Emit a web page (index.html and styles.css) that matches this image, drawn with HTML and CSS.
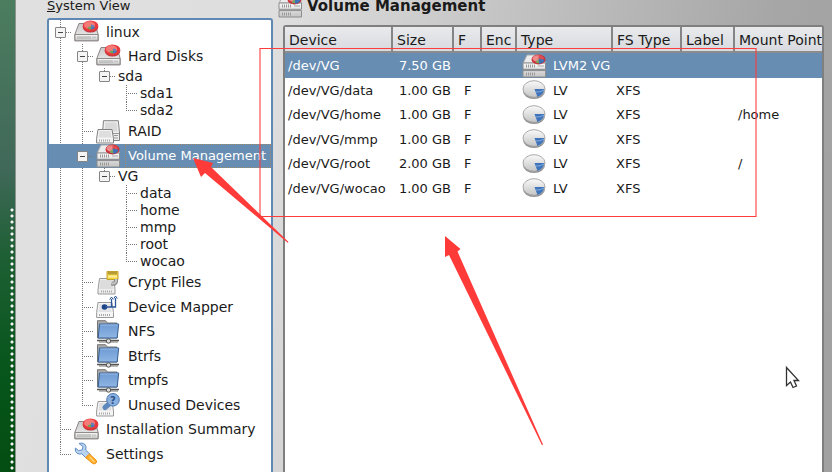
FILE: index.html
```
<!DOCTYPE html>
<html lang="en">

<head>
  <meta charset="utf-8">
  <title>Volume Management</title>
  <link rel="stylesheet" href="styles.css">
</head>

<body>
  <!-- shared icons -->
  <svg class="sprite" width="0" height="0" aria-hidden="true">
    <defs>
      <linearGradient id="metal" x1="0" y1="0" x2="0" y2="1">
        <stop offset="0" stop-color="#fafafa" />
        <stop offset="1" stop-color="#c4c4c4" />
      </linearGradient>
      <linearGradient id="face" x1="0" y1="0" x2="0" y2="1">
        <stop offset="0" stop-color="#c9c9c9" />
        <stop offset="1" stop-color="#f2f2f2" />
      </linearGradient>
      <linearGradient id="blue" x1="0" y1="0" x2="0" y2="1">
        <stop offset="0" stop-color="#6d9bd4" />
        <stop offset="1" stop-color="#8fb5e3" />
      </linearGradient>
    </defs>
    <symbol id="disk" viewBox="0 0 25 24">
      <path d="M5 3.5h16l3.2 11v6.3H.8v-6.3z" fill="url(#face)" stroke="#8b8482" />
      <path d="M1 14.5h23v6.2H1z" fill="url(#metal)" stroke="#918c8a" />
      <path d="M4 16v3M6 16v3M8 16v3M10 16v3M12 16v3M14 16v3M16 16v3" stroke="#aaa" />
      <path d="M18 17.5h4" stroke="#c8c8c8" stroke-width="2" />
      <ellipse cx="16.5" cy="7" rx="7.8" ry="5.6" fill="#b9323a" />
      <ellipse cx="16.5" cy="6" rx="7.8" ry="5.6" fill="#e8393d" />
      <ellipse cx="15.5" cy="5" rx="5.5" ry="3.8" fill="#f47a78" />
      <path d="M17 6.2V4.5q3 0 4 2.2z" fill="#5d85bb" />
      <path d="M17 6.2l4 .8q-1 2.500-4 2.500z" fill="#4779bd" />
      <path d="M17 6.2v3.300q-3 0-3.600-2.300z" fill="#6fa557" />
    </symbol>
    <symbol id="volume" viewBox="0 0 25 24">
      <path d="M5 1h15l3.5 8H1.2z" fill="#ececec" stroke="#aaa" />
      <path d="M1 9h22.5v6.3H1zM1 16.6h22.5v6.4H1z" fill="url(#metal)" stroke="#8c8c8c" />
      <path d="M4 12h10M4 20h10" stroke="#999" stroke-width="3" stroke-dasharray="1 1" />
      <path d="M16 12h6M16 20h6" stroke="#ccc" stroke-width="2" />
      <ellipse cx="16.5" cy="5.5" rx="7" ry="5" fill="#c8303a" />
      <ellipse cx="15.5" cy="4.5" rx="5" ry="3.3" fill="#ee8b88" />
      <path d="M16.500 5V1.300q5.500.4 5.800 4.200z" fill="#dd4c50" />
      <path d="M16.500 4.500l6 1.200q-1 4-5.500 4z" fill="#3f71b6" />
      <path d="M16.500 5l-3 3.300q1.600 1.300 3.600 1z" fill="#72a861" />
    </symbol>
    <symbol id="raid" viewBox="0 0 25 24">
      <path d="M7.500.7h14.800l1.200 12.300v7.500H6.500V13z" fill="#eee" stroke="#808080" />
      <path d="M9.500 2.500h11l1 9h-13z" fill="#d9d9d9" />
      <path d="M7 13.500h16M18 15.500h4M18 18h4" stroke="#999" />
      <path d="M2 9.500h14l1.500 9v4.500H.6v-4.500z" fill="#f4f4f4" stroke="#808080" />
      <path d="M3.500 11h11l1 6.500h-13z" fill="#dedede" />
      <path d="M3 20.500h12" stroke="#aaa" stroke-width="2" stroke-dasharray="1 1" />
    </symbol>
    <symbol id="crypt" viewBox="0 0 25 24">
      <path d="M3.500 7.500H18l1 11v4.500H2v-4.500z" fill="#eee" stroke="#999" />
      <path d="M4.500 9h12l1 9h-14z" fill="#dcdcdc" />
      <path d="M5 20.500h11" stroke="#aaa" stroke-width="2" stroke-dasharray="1 1" />
      <path d="M11 .5h11v8H11z" fill="#f5d43e" stroke="#c2a02c" />
      <path d="M12 1h9v2.500h-9z" fill="#b89a35" />
      <path d="M12 5.500h9" stroke="#fff1a0" stroke-width="2" />
      <path d="M20 8v2.500q-1 3-4.500 2" fill="none" stroke="#8a8a8a" stroke-width="4" />
      <path d="M20 8v2.500q-1 2.600-4 2" fill="none" stroke="#c4c4c4" stroke-width="2" />
    </symbol>
    <symbol id="mapper" viewBox="0 0 25 24">
      <path d="M2 7.500h14l1.500 10v5H.6v-5z" fill="#f5f5f5" stroke="#999" />
      <path d="M3.500 9h11l1 8h-13z" fill="#e2e4e8" />
      <path d="M3 20h12" stroke="#aaa" stroke-width="2" stroke-dasharray="1 1" />
      <circle cx="8.500" cy="12" r="2.800" fill="#1c4587" />
      <path d="M9 12h10.500V3M15.500 12V4" fill="none" stroke="#2a5699" stroke-width="1.300" />
      <path d="M13.700 4.500L15.500 2l1.800 2.500M17.800 3.500L19.500 1l1.800 2.500" fill="none" stroke="#2a5699" />
    </symbol>
    <symbol id="netfolder" viewBox="0 0 25 24">
      <path d="M3 22h19" stroke="#bbb" stroke-width="2" />
      <path d="M1 20.500h22" stroke="#555" stroke-width="1.500" />
      <path d="M1.500 18V.7h8l2 2.300h9.500v15z" fill="#aaa" stroke="#757575" />
      <path d="M3.500 4h19.200l-1.500 14H2.200z" fill="url(#blue)" stroke="#376096" />
      <path d="M4.300 5h17.500" stroke="#9abce5" />
      <circle cx="12.500" cy="21" r="2.200" fill="#ddd" stroke="#555" />
    </symbol>
    <symbol id="unused" viewBox="0 0 25 24">
      <path d="M2 8.500h14l1.500 9.500v5H.6v-5z" fill="#f5f5f5" stroke="#999" />
      <path d="M3.500 10h11l1 7.500h-13z" fill="#e0e0e0" />
      <path d="M3 20.500h12" stroke="#aaa" stroke-width="2" stroke-dasharray="1 1" />
      <path d="M13 11l-4 3.500" stroke="#5d88bd" stroke-width="5" stroke-linecap="round" />
      <circle cx="17" cy="6.800" r="6.300" fill="#8bb0de" stroke="#4b79b4" />
      <text x="17" y="10.500" class="icon-mark">?</text>
    </symbol>
    <symbol id="tools" viewBox="0 0 25 24">
      <path d="M5 1.500l4 3-.8 3.500-3.700.5L1.300 6q-.6 4 2 5.500 2.500 1 4.500.3l4.700 4.700 4-3.800-4.700-4.500Q12.800 4 10.500 2 8 .3 5 1.500z" fill="#b9d2ef" stroke="#5f8fc6" />
      <path d="M11.500 15.500l4-3.500 6.500 6q1.500 2.300-.5 3.500-1.500 1-3.500-.5z" fill="#ffac26" stroke="#f0951c" />
      <path d="M15.500 15l5 5" stroke="#ffd27d" stroke-width="1.500" />
    </symbol>
    <symbol id="pie" viewBox="0 0 25 24">
      <ellipse cx="12" cy="13" rx="11" ry="8" fill="#929292" />
      <ellipse cx="12" cy="11" rx="11" ry="8.300" fill="url(#metal)" stroke="#aaa" />
      <path d="M12.500 11h9.800q-.5 5.500-6.800 8z" fill="#3d74bc" />
      <path d="M14 14q4 .5 8-2" fill="none" stroke="#87abd9" />
    </symbol>
  </svg>

  <div class="desktop">
    <div class="wallpaper"></div>
    <div class="window">
      <nav class="sidebar">
        <h2 class="caption"><u>S</u>ystem View</h2>
        <ul class="tree">
          <li>
            <div class="row"><button class="toggle" aria-label="Collapse linux"></button><span class="branch short"></span><svg class="icon"><use href="#disk" /></svg><a href="#linux">linux</a></div>
            <ul>
              <li>
                <div class="row"><button class="toggle" aria-label="Collapse Hard Disks"></button><span class="branch short"></span><svg class="icon"><use href="#disk" /></svg><a href="#disks">Hard Disks</a></div>
                <ul class="small">
                  <li>
                    <div class="row"><button class="toggle" aria-label="Collapse sda"></button><span class="branch short"></span><a href="#sda">sda</a></div>
                    <ul>
                      <li><div class="row"><span class="branch"></span><a href="#sda1">sda1</a></div></li>
                      <li><div class="row"><span class="branch"></span><a href="#sda2">sda2</a></div></li>
                    </ul>
                  </li>
                </ul>
              </li>
              <li><div class="row"><span class="branch"></span><svg class="icon"><use href="#raid" /></svg><a href="#raids">RAID</a></div></li>
              <li>
                <div class="row selected"><button class="toggle" aria-label="Collapse Volume Management"></button><span class="branch short"></span><svg class="icon"><use href="#volume" /></svg><a href="#volumes">Volume Management</a></div>
                <ul class="small">
                  <li>
                    <div class="row"><button class="toggle" aria-label="Collapse VG"></button><span class="branch short"></span><a href="#vg">VG</a></div>
                    <ul>
                      <li><div class="row"><span class="branch"></span><a href="#data">data</a></div></li>
                      <li><div class="row"><span class="branch"></span><a href="#home">home</a></div></li>
                      <li><div class="row"><span class="branch"></span><a href="#mmp">mmp</a></div></li>
                      <li><div class="row"><span class="branch"></span><a href="#root">root</a></div></li>
                      <li><div class="row"><span class="branch"></span><a href="#wocao">wocao</a></div></li>
                    </ul>
                  </li>
                </ul>
              </li>
              <li><div class="row"><span class="branch"></span><svg class="icon"><use href="#crypt" /></svg><a href="#cryptfiles">Crypt Files</a></div></li>
              <li><div class="row"><span class="branch"></span><svg class="icon"><use href="#mapper" /></svg><a href="#dm">Device Mapper</a></div></li>
              <li><div class="row"><span class="branch"></span><svg class="icon"><use href="#netfolder" /></svg><a href="#nfs">NFS</a></div></li>
              <li><div class="row"><span class="branch"></span><svg class="icon"><use href="#netfolder" /></svg><a href="#btrfs">Btrfs</a></div></li>
              <li><div class="row"><span class="branch"></span><svg class="icon"><use href="#netfolder" /></svg><a href="#tmpfs">tmpfs</a></div></li>
              <li><div class="row"><span class="branch"></span><svg class="icon"><use href="#unused" /></svg><a href="#unuseddevices">Unused Devices</a></div></li>
            </ul>
          </li>
          <li><div class="row"><span class="branch"></span><svg class="icon"><use href="#disk" /></svg><a href="#summary">Installation Summary</a></div></li>
          <li><div class="row"><span class="branch"></span><svg class="icon"><use href="#tools" /></svg><a href="#settings">Settings</a></div></li>
        </ul>
      </nav>

      <main class="content">
        <h1 class="title"><svg class="icon"><use href="#volume" /></svg>Volume Management</h1>
        <div class="panel">
          <table>
            <colgroup>
              <col class="col-device"><col class="col-size"><col class="col-f"><col class="col-enc">
              <col class="col-type"><col class="col-fs"><col class="col-label"><col>
            </colgroup>
            <thead>
              <tr><th>Device</th><th>Size</th><th>F</th><th>Enc</th><th>Type</th><th>FS Type</th><th>Label</th><th>Mount Point</th></tr>
            </thead>
            <tbody>
              <tr class="selected"><td>/dev/VG</td><td class="size">7.50 GB</td><td></td><td></td><td><span class="type"><svg class="icon"><use href="#volume" /></svg>LVM2 VG</span></td><td></td><td></td><td></td></tr>
              <tr><td>/dev/VG/data</td><td class="size">1.00 GB</td><td class="flag">F</td><td></td><td><span class="type"><svg class="icon"><use href="#pie" /></svg>LV</span></td><td>XFS</td><td></td><td></td></tr>
              <tr><td>/dev/VG/home</td><td class="size">1.00 GB</td><td class="flag">F</td><td></td><td><span class="type"><svg class="icon"><use href="#pie" /></svg>LV</span></td><td>XFS</td><td></td><td>/home</td></tr>
              <tr><td>/dev/VG/mmp</td><td class="size">1.00 GB</td><td class="flag">F</td><td></td><td><span class="type"><svg class="icon"><use href="#pie" /></svg>LV</span></td><td>XFS</td><td></td><td></td></tr>
              <tr><td>/dev/VG/root</td><td class="size">2.00 GB</td><td class="flag">F</td><td></td><td><span class="type"><svg class="icon"><use href="#pie" /></svg>LV</span></td><td>XFS</td><td></td><td>/</td></tr>
              <tr><td>/dev/VG/wocao</td><td class="size">1.00 GB</td><td class="flag">F</td><td></td><td><span class="type"><svg class="icon"><use href="#pie" /></svg>LV</span></td><td>XFS</td><td></td><td></td></tr>
            </tbody>
          </table>
        </div>
      </main>
    </div>
  </div>

  <!-- red marks and mouse pointer on top of the window -->
  <svg class="marks" width="832" height="472" aria-hidden="true">
    <path d="M260 48.500h496M260 216.500h496" stroke="#ff3c3c" />
    <path d="M260 48v169M756 48v169" stroke="#ff3c3c" stroke-opacity=".55" stroke-width="2" />
    <path d="M193 158l20 5-2 4 77.500 75-.8.8L205 173l-4 4z" fill="#ff3b3a" />
    <path d="M445 236l15.500 13-3 2.500L543 444.500l-1 .7L449 255l-4 2z" fill="#ff3b3a" />
    <path d="M786.500 367.500v18l4-3.500 2.500 5.500 3.500-1.500-2.500-5.500h4.500z" fill="#fff" stroke="#333" stroke-width="1.300" />
  </svg>
</body>

</html>
```
FILE: styles.css
```
* {
  box-sizing: border-box;
}

body {
  margin: 0;
  overflow: hidden;
  font-family: "DejaVu Sans", Verdana, sans-serif;
  font-size: 13px;
  color: #1a1a1a;
}

ul {
  list-style: none;
  margin: 0;
  padding: 0;
}

.sprite {
  position: absolute;
}

.icon {
  flex: none;
  width: 25px;
  height: 24px;
}

.icon-mark {
  font-size: 10px;
  font-weight: bold;
  fill: #28538c;
  text-anchor: middle;
}

.desktop {
  display: flex;
  height: 100vh;
}

.wallpaper {
  flex: 0 0 16px;
  padding-top: 208px;
  border-right: 1px solid #8c948e;
  background: linear-gradient(#4c7d5f, #41695a 35%, #1d5f33 55%, #06551a 80%, #044d12);
}

.wallpaper::after {
  content: "";
  display: block;
  height: 100%;
  margin-left: 10px;
  background: radial-gradient(circle at 2px 2px, #f2f5f3 1px, transparent 2px) 0 0 / 6px 6px;
}

.window {
  flex: 1;
  display: flex;
  gap: 10px;
  min-width: 0;
  padding: 0 8px 0 31px;
  background: linear-gradient(100deg, #e0e0e0, #dedede 30%, #c3c3c3 55%, #a6a6a6 85%, #a0a0a0);
}

.sidebar {
  flex: 0 0 226px;
  display: flex;
  flex-direction: column;
  min-width: 0;
}

.caption {
  margin: 0 0 6px;
  font-size: 13px;
  font-weight: normal;
  line-height: 12px;
}

.tree {
  flex: 1;
  padding-left: 11px;
  overflow: hidden;
  border: solid #5f88b4;
  border-width: 2px 2px 0;
  border-radius: 3px 3px 0 0;
  background: #fff;
  font-size: 14px;
}

.tree ul {
  margin-left: 22px;
}

/* vertical guide line of each level */
.tree li {
  background: repeating-linear-gradient(#777 0 1px, transparent 1px 2px) 0 0 / 1px 100% no-repeat;
}

.tree li:last-child {
  background-size: 1px 12px;
}

.tree .small li:last-child {
  background-size: 1px 9px;
}

.row {
  display: flex;
  align-items: center;
  height: 24px;
  white-space: nowrap;
}

li:nth-child(even) > .row {
  height: 25px;
}

.small li > .row {
  height: 17px;
}

.row a {
  padding: 0 3px;
  color: inherit;
  line-height: 17px;
  text-decoration: none;
}

.row .icon {
  margin: 0 4px 0 3px;
}

.branch {
  width: 11px;
  height: 1px;
  background: repeating-linear-gradient(90deg, #777 0 1px, transparent 1px 2px);
}

.branch.short {
  width: 5px;
}

.toggle {
  flex: none;
  width: 11px;
  height: 11px;
  margin-left: -5px;
  padding: 0;
  border: 1px solid #858585;
  border-radius: 1px;
  background: linear-gradient(#444, #444) center / 5px 1px no-repeat #f4f4f4;
}

.row.selected {
  margin-left: -33px;
  padding-left: 33px;
  background: #678db2;
  color: #fff;
  font-size: 13px;
}

.row.selected a {
  flex: 1;
  line-height: 24px;
  outline: 1px dotted #9a8a70;
  outline-offset: -1px;
}

.content {
  flex: 1;
  display: flex;
  flex-direction: column;
  min-width: 0;
}

.title {
  display: flex;
  align-items: center;
  gap: 4px;
  height: 12px;
  margin: 0 0 13px -5px;
  font-size: 15px;
}

.panel {
  flex: 1;
  overflow: hidden;
  border: 2px solid #7f7f7f;
  border-bottom: 0;
  border-radius: 3px 3px 0 0;
  background: #fff;
}

table {
  width: 100%;
  table-layout: fixed;
  border-collapse: separate;
  border-spacing: 0;
}

.col-device {
  width: 108px;
}

.col-size {
  width: 61px;
}

.col-f {
  width: 28px;
}

.col-enc {
  width: 35px;
}

.col-type {
  width: 96px;
}

.col-fs {
  width: 69px;
}

.col-label {
  width: 53px;
}

th,
td {
  padding: 0 3px;
  white-space: nowrap;
  text-align: left;
}

th {
  height: 26px;
  padding: 1px 0 0 4px;
  border-right: 2px solid #858585;
  border-bottom: 2px solid #8c8c8c;
  background: linear-gradient(#e9eaec, #d8dadf);
  font-size: 14px;
  font-weight: normal;
}

th:last-child {
  border-right: 0;
}

td {
  height: 25px;
}

tr:nth-child(even) td {
  height: 24px;
}

tr.selected td {
  background: #678db2;
  color: #fff;
}

td.size {
  text-align: right;
}

td.flag {
  padding-left: 10px;
}

.type {
  display: flex;
  align-items: center;
  gap: 6px;
  padding-left: 2px;
}

.marks {
  position: absolute;
  top: 0;
  left: 0;
  pointer-events: none;
}
```
